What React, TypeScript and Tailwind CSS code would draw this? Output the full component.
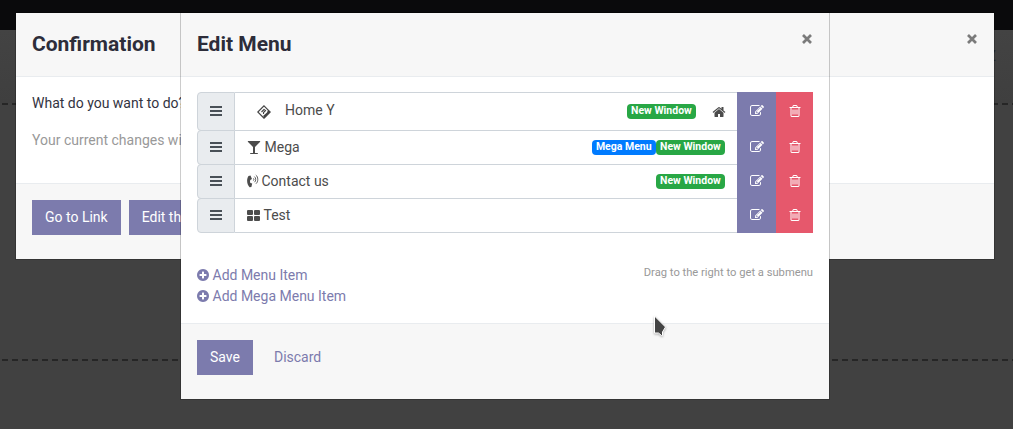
import type { ReactNode } from "react";

const PATHS = {
  edit: "M888 1184l116-116-152-152-116 116v56h96v96h56zm440-720q-16-16-33 1l-350 350q-17 17-1 33t33-1l350-350q17-17 1-33zm80 594v190q0 119-84.5 203.5t-203.5 84.5h-832q-119 0-203.5-84.5t-84.5-203.5v-832q0-119 84.5-203.5t203.5-84.5h832q63 0 117 25 15 7 18 23 3 17-9 29l-49 49q-14 14-32 8-23-6-45-6h-832q-66 0-113 47t-47 113v832q0 66 47 113t113 47h832q66 0 113-47t47-113v-126q0-13 9-22l64-64q15-15 35-7t20 29zm-96-738l288 288-672 672h-288v-288zm444 132l-92 92-288-288 92-92q28-28 68-28t68 28l152 152q28 28 28 68t-28 68z",
  trash: "M704 736v576q0 14-9 23t-23 9h-64q-14 0-23-9t-9-23v-576q0-14 9-23t23-9h64q14 0 23 9t9 23zm256 0v576q0 14-9 23t-23 9h-64q-14 0-23-9t-9-23v-576q0-14 9-23t23-9h64q14 0 23 9t9 23zm256 0v576q0 14-9 23t-23 9h-64q-14 0-23-9t-9-23v-576q0-14 9-23t23-9h64q14 0 23 9t9 23zm128 724v-948h-896v948q0 22 7 40.5t14.5 27 10.5 8.5h832q3 0 10.5-8.5t14.5-27 7-40.5zm-672-1076h448l-48-117q-7-9-17-11h-317q-10 2-17 11zm928 32v64q0 14-9 23t-23 9h-96v948q0 83-47 143.5t-113 60.5h-832q-66 0-113-58.5t-47-141.5v-952h-96q-14 0-23-9t-9-23v-64q0-14 9-23t23-9h309l70-167q15-37 54-63t79-26h320q40 0 79 26t54 63l70 167h309q14 0 23 9t9 23z",
  home: "M1472 992v480q0 26-19 45t-45 19h-384v-384h-256v384h-384q-26 0-45-19t-19-45v-480q0-1 .5-3t.5-3l575-474 575 474q1 2 1 6zm223-69l-62 74q-8 9-21 11h-3q-13 0-21-7l-692-577-692 577q-12 8-24 7-13-2-21-11l-62-74q-8-10-7-23.5t11-21.5l719-599q32-26 76-26t76 26l244 204v-195q0-14 9-23t23-9h192q14 0 23 9t9 23v408l219 182q10 8 11 21.5t-7 23.5z",
  plus: "M1344 960v-128q0-26-19-45t-45-19h-256v-256q0-26-19-45t-45-19h-128q-26 0-45 19t-19 45v256h-256q-26 0-45 19t-19 45v128q0 26 19 45t45 19h256v256q0 26 19 45t45 19h128q26 0 45-19t19-45v-256h256q26 0 45-19t19-45zm320-64q0 209-103 385.5t-279.5 279.5-385.5 103-385.5-103-279.5-279.5-103-385.5 103-385.5 279.5-279.5 385.5-103 385.5 103 279.5 279.5 103 385.5z",
  glass: "M1699 186q0 35-43 78l-632 632v768h320q26 0 45 19t19 45-19 45-45 19h-896q-26 0-45-19t-19-45 19-45 45-19h320v-768l-632-632q-43-43-43-78 0-23 18-36.5t38-17.5 43-4h1408q23 0 43 4t38 17.5 18 36.5z",
};

function Icon({ name, className = "" }: { name: keyof typeof PATHS; className?: string }) {
  return (
    <svg viewBox="0 0 1792 1792" className={`size-[14px] shrink-0 ${className}`} fill="currentColor">
      <path d={PATHS[name]} />
    </svg>
  );
}

function Bars() {
  return (
    <svg viewBox="0 0 12 10" className="mb-px h-[10px] w-[12px]" fill="currentColor">
      <path d="M0 0h12v2H0zM0 4h12v2H0zM0 8h12v2H0z" />
    </svg>
  );
}

function Diamond() {
  return (
    <svg viewBox="0 0 14 14" className="size-[14px]" fill="none" stroke="#444">
      <path d="M7 .8 13.200 7 7 13.200.8 7Z" strokeWidth="1.200" />
      <path d="M7.500 13 13.200 7.200 11 5 10 7.500 6 11Z" fill="#444" stroke="none" />
      <path d="M4.500 7 7 4.500 8.500 5.500 6.500 7.500V9" strokeWidth="1.100" />
    </svg>
  );
}

function PhoneVolume() {
  return (
    <svg viewBox="0 0 12 14" className="mb-px h-[14px] w-[12px]" fill="none" stroke="currentColor">
      <path d="M3.500 1.500 5 5 3.300 6.100c-.4 1.100-.4 1.900.1 3l1.800.5-.8 3.400-1.800.3C-.5 10-.5 5 1.500 1.900Z" fill="currentColor" stroke="none" />
      <path d="M6.200 4.300c.9.500.9 1.700.2 2.300M7.400 2.600c1.700 1.100 1.700 4.300.2 5.600M8.800 1c2.600 1.900 2.600 6.800.2 8.700" strokeWidth=".9" />
    </svg>
  );
}

function Grid() {
  return (
    <svg viewBox="0 0 13 11" className="h-[11px] w-[13px]" fill="currentColor">
      <rect width="6" height="5" rx="1" />
      <rect x="7" width="6" height="5" rx="1" />
      <rect y="6" width="6" height="5" rx="1" />
      <rect x="7" y="6" width="6" height="5" rx="1" />
    </svg>
  );
}

function Close() {
  return (
    <svg viewBox="0 0 10 10" className="size-[10px] text-[#7b7b7b]" stroke="currentColor" strokeWidth="2.700">
      <path d="M1 1l8 8M9 1 1 9" />
    </svg>
  );
}

function Badge({ children, blue = false }: { children: ReactNode; blue?: boolean }) {
  return (
    <span className={`flex h-[15px] items-center rounded-[4px] px-[4.2px] text-[10.5px] leading-none font-bold text-white ${blue ? "bg-[#007bff]" : "bg-[#28a745]"}`}>
      {children}
    </span>
  );
}

function Row({ children, badges, className }: { children: ReactNode; badges?: ReactNode; className: string }) {
  return (
    <li className={`flex ${className}`}>
      <div className="flex w-[38px] items-center justify-center rounded-l-[4px] border border-[#ced4da] bg-[#e9ecef] text-[#495057]">
        <Bars />
      </div>
      <div className="flex flex-1 items-center justify-between border-y border-[#ced4da] pr-3 pl-3">
        <div className="flex items-center">{children}</div>
        <div className="flex items-center">{badges}</div>
      </div>
      <button className="flex w-[39px] items-center justify-center bg-[#7c7bad] pb-px text-white"><Icon name="edit" /></button>
      <button className="flex w-[37px] items-center justify-center bg-[#e6586c] pb-px text-white"><Icon name="trash" /></button>
    </li>
  );
}

function Header({ title }: { title: string }) {
  return (
    <header className="flex h-16 shrink-0 justify-between border-b border-[#e9ecef] bg-[#f7f7f7] pt-[15px] pr-[17px] pl-4">
      <h2 className="text-[21px] leading-[32px] font-bold text-[#2d2d3a]">{title}</h2>
      <button className="mt-[6px] size-[10px]"><Close /></button>
    </header>
  );
}

function Button({ children }: { children: ReactNode }) {
  return <button className="h-[35px] shrink-0 bg-[#7c7bad] px-[13px] whitespace-nowrap text-white">{children}</button>;
}

function Dashes() {
  return <div className="h-[2px] bg-[repeating-linear-gradient(90deg,transparent_0_2px,#262626_2px_8px,transparent_8px_10px)]" />;
}

export default function App() {
  return (
    <div className="relative h-[429px] w-[1013px] overflow-hidden bg-[#414141] font-[Roboto,sans-serif] text-[14px] leading-[21px] text-[#4c4c4c]">
      <div className="h-[30px] bg-[#0a0a0c]" />
      <div className="flex h-[73px] items-start justify-end bg-linear-to-b from-[#434343] to-[#3f3f3f] pt-4 pr-[17px] text-[15px] text-[#25282b]">Z</div>
      <Dashes />
      <div className="h-[254px]" />
      <Dashes />

      <section className="absolute top-[13px] left-4 flex h-[246px] w-[978px] flex-col bg-white shadow-[0_0_0_1px_rgba(0,0,0,0.2)]">
        <Header title="Confirmation" />
        <div className="flex-1 px-4 pt-4">
          <p className="mb-4 text-[#33333f]">What do you want to do?</p>
          <p className="text-[#999]">Your current changes will</p>
        </div>
        <footer className="flex h-[76px] gap-2 border-t border-[#e9ecef] bg-[#f7f7f7] px-4 pt-4">
          <Button>Go to Link</Button>
          <Button>Edit the menu</Button>
        </footer>
      </section>

      <section className="absolute top-[13px] left-[181px] flex h-[386px] w-[648px] flex-col bg-white shadow-[0_0_0_1px_rgba(0,0,0,0.2)]">
        <Header title="Edit Menu" />
        <div className="flex-1 px-4 pt-[15px]">
          <ul>
            <Row className="h-[39px]" badges={<><Badge>New Window</Badge><Icon name="home" className="ml-[15.500px] -mr-[0.5px]" /></>}>
              <span className="ml-[10px] flex"><Diamond /></span>
              <span className="ml-[14px] -mt-[3px]">Home Y</span>
            </Row>
            <Row className="-mt-px h-[35px]" badges={<><Badge blue>Mega Menu</Badge><Badge>New Window</Badge></>}>
              <Icon name="glass" className="mb-px" /><span className="ml-[3.500px]">Mega</span>
            </Row>
            <Row className="-mt-px h-[35px]" badges={<Badge>New Window</Badge>}>
              <PhoneVolume /><span className="ml-[2.500px]">Contact us</span>
            </Row>
            <Row className="-mt-px h-[35px]">
              <Grid /><span className="ml-[3.500px]">Test</span>
            </Row>
          </ul>
          <div className="mt-8 flex justify-between">
            <div className="text-[#7c7bad]">
              <a className="flex items-center"><Icon name="plus" className="-ml-px mr-[2.500px] mb-px" />Add Menu Item</a>
              <a className="flex items-center"><Icon name="plus" className="-ml-px mr-[2.500px] mb-px" />Add Mega Menu Item</a>
            </div>
            <small className="text-[11.200px] leading-[16px] text-[#999]">Drag to the right to get a submenu</small>
          </div>
        </div>
        <footer className="flex h-[76px] gap-2 border-t border-[#e9ecef] bg-[#f7f7f7] px-4 pt-4">
          <Button>Save</Button>
          <button className="h-[35px] px-[13px] text-[#7c7bad]">Discard</button>
        </footer>
      </section>

      <svg viewBox="0 0 14 22" className="absolute top-[315px] left-[653px] h-[22px] w-[14px] drop-shadow-[0_1px_1px_rgba(0,0,0,0.3)]">
        <path d="M1.500 1v17h4l3 2.500h1V17l3-5Z" fill="#444" stroke="#fff" />
      </svg>
    </div>
  );
}
